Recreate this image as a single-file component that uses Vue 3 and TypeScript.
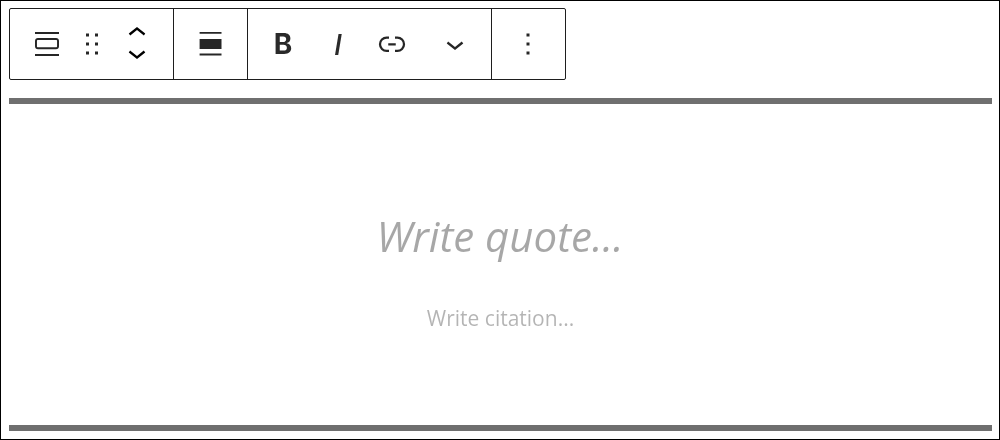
<template>
  <div class="frame">
    <div class="toolbar">
      <div class="group group-block">
        <button class="btn switcher">
          <svg viewBox="0 0 24 24" width="36" height="36"><path d="M4 4h16v1.3H4zM4 18.7h16V20H4zM6 8h12c1.2 0 2 .8 2 2v3.5c0 1.2-.8 2-2 2H6c-1.2 0-2-.8-2-2V10c0-1.2.8-2 2-2zm0 1.3c-.5 0-.7.2-.7.7v3.5c0 .5.2.7.7.7h12c.5 0 .7-.2.7-.7V10c0-.5-.2-.7-.7-.7z" fill-rule="evenodd" /></svg>
        </button>
        <button class="btn drag">
          <svg viewBox="0 0 24 24" width="36" height="36"><path d="M8 7h2V5H8v2zm0 6h2v-2H8v2zm0 6h2v-2H8v2zm6-14v2h2V5h-2zm0 8h2v-2h-2v2zm0 6h2v-2h-2v2z" /></svg>
        </button>
        <div class="movers">
          <svg viewBox="0 0 24 12" width="36" height="18"><path d="M6.5 8.4L12 4l5.5 4.4-.9 1.2L12 6l-4.5 3.6-1-1.2z" /></svg>
          <svg viewBox="0 0 24 12" width="36" height="18"><path d="M17.5 3.6L12 8 6.5 3.6l.9-1.2L12 6l4.5-3.6 1 1.2z" /></svg>
        </div>
      </div>
      <div class="group group-single">
        <button class="btn">
          <svg viewBox="0 0 24 24" width="36" height="36"><path d="M4.4 4h14.6v1.2H4.4zM4.4 8.7h14.6v6.6H4.4zM4.4 18.4h14.6v1.2H4.4z" /></svg>
        </button>
      </div>
      <div class="group group-format">
        <button class="btn fmt bold">B</button>
        <button class="btn fmt italic">I</button>
        <button class="btn fmt">
          <svg viewBox="0 0 24 24" width="36" height="36"><path d="M10 17.389H8.444A5.194 5.194 0 1 1 8.444 7H10v1.5H8.444a3.694 3.694 0 0 0 0 7.389H10v1.5ZM14 7h1.556a5.194 5.194 0 0 1 0 10.39H14v-1.5h1.556a3.694 3.694 0 0 0 0-7.39H14V7Zm-4.5 6h5v-1.5h-5V13Z" /></svg>
        </button>
        <button class="btn fmt more">
          <svg viewBox="0 0 24 24" width="36" height="36"><path d="M17.5 11.6L12 16l-5.5-4.4.9-1.2L12 14l4.5-3.6 1 1.2z" /></svg>
        </button>
      </div>
      <div class="group group-last">
        <button class="btn">
          <svg viewBox="0 0 24 24" width="36" height="36"><path d="M13 19h-2v-2h2v2zm0-6h-2v-2h2v2zm0-6h-2V5h2v2z" /></svg>
        </button>
      </div>
    </div>

    <blockquote class="quote">
      <p class="quote-text">Write quote...</p>
      <cite class="citation">Write citation...</cite>
    </blockquote>
  </div>
</template>

<script setup lang="ts">
</script>

<style>
html,
body {
  margin: 0;
  background: #fff;
}
</style>

<style scoped>
.frame {
  box-sizing: border-box;
  width: 1000px;
  height: 440px;
  padding: 7px 7px 8px 8px;
  border: 1px solid #000;
  background: #fff;
  overflow: hidden;
}

.toolbar {
  box-sizing: border-box;
  display: flex;
  width: 557px;
  height: 72px;
  border: 1px solid #1e1e1e;
  border-radius: 2px;
}

.group {
  box-sizing: border-box;
  display: flex;
  align-items: center;
  border-right: 1px solid #1e1e1e;
}

.group-block {
  width: 164px;
  padding-left: 19px;
}

.group-single {
  width: 74px;
  justify-content: center;
}

.group-format {
  width: 244px;
  padding-left: 8px;
}

.group-last {
  width: 73px;
  padding-right: 1px;
  justify-content: center;
  border-right: none;
}

.btn {
  display: flex;
  align-items: center;
  justify-content: center;
  padding: 0;
  border: none;
  background: none;
  color: #2a2a2a;
  font-family: "Inter", sans-serif;
}

.btn svg {
  display: block;
  fill: #262626;
}

.drag {
  margin-left: 8.5px;
}

.movers {
  display: flex;
  flex-direction: column;
  margin: -2px 0 0 9.5px;
  gap: 7.5px;
}

.fmt {
  width: 54px;
  height: 36px;
}

.bold {
  font-size: 28px;
  font-weight: 700;
  will-change: transform;
}

.italic {
  margin-left: 1px;
  font-size: 29px;
  font-style: italic;
  font-weight: 500;
  will-change: transform;
}

.more {
  margin-left: 9px;
}

.quote {
  box-sizing: border-box;
  display: flex;
  flex-direction: column;
  align-items: center;
  height: 333px;
  margin: 18px 0 0;
  padding-top: 103px;
  border-top: 6px solid #6f6f6f;
  border-bottom: 6px solid #6f6f6f;
  font-family: "Open Sans", sans-serif;
}

.quote-text {
  margin: 0 1px 0 0;
  color: #1e1e1e;
  opacity: 0.39;
  font-size: 42px;
  font-style: italic;
  line-height: 58px;
  will-change: opacity;
}

.citation {
  margin-top: 38px;
  color: #1e1e1e;
  opacity: 0.33;
  font-size: 21px;
  font-style: normal;
  line-height: 30px;
  will-change: opacity;
}
</style>
